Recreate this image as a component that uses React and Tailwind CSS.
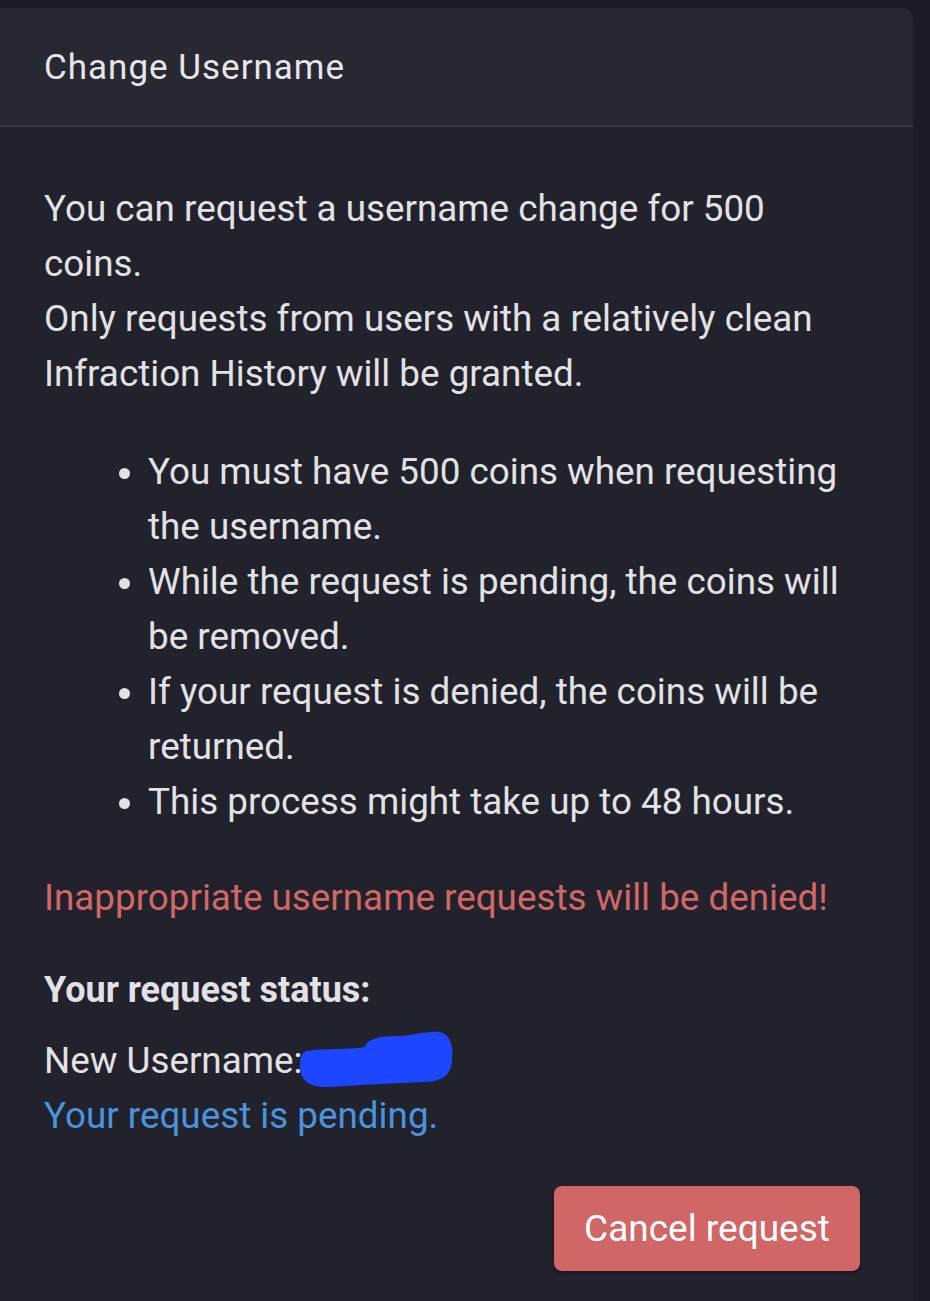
export default function App() {
  return (
    <div className="w-[930px] h-[1301px] bg-[#1b1b26] pt-[8px] overflow-hidden" style={{ fontFamily: "Roboto, 'Noto Sans', sans-serif" }}>
      <div className="w-[913px] h-[1320px] bg-[#22222c] rounded-tr-[10px] flex flex-col">
        <div className="h-[119px] bg-[#282833] rounded-tr-[10px] border-b-2 border-[#393945] flex items-center pl-[44px] pt-[4px]">
          <h1 className="text-[35px] text-[#e6e6ea] tracking-[1px]">Change Username</h1>
        </div>
        <div className="pl-[44px] pr-[52px] pt-[54px] text-[36.8px] leading-[55px] text-[#e2e2e6]">
          <p>You can request a username change for 500 coins.<br />Only requests from users with a relatively clean Infraction History will be granted.</p>
          <ul className="list-disc pl-[104px] mt-[43px] marker:text-[#e2e2e6]">
            <li>You must have 500 coins when requesting the username.</li>
            <li>While the request is pending, the coins will be removed.</li>
            <li>If your request is denied, the coins will be returned.</li>
            <li>This process might take up to 48 hours.</li>
          </ul>
          <p className="text-[#d26766] mt-[41px]">Inappropriate username requests will be denied!</p>
          <p className="font-bold mt-[38px] text-[36px]">Your request status:</p>
          <div className="mt-[15px] flex items-center h-[55px]">
            <span>New Username:</span>
            <svg width="155" height="58" viewBox="0 0 155 58" className="-ml-[3px] -mt-[4px]">
              <path d="M8 21 C 25 18, 50 20, 66 17 C 68 9, 80 6, 100 6 C 115 6, 125 1, 140 2 C 150 3, 155 15, 153 30 C 152 45, 145 51, 125 52 C 95 53, 60 55, 30 57 C 10 58, 2 50, 1 38 C 0 28, 3 22, 8 21 Z" fill="#1c46ff" />
            </svg>
          </div>
          <p className="text-[#4a93de]">Your request is pending.</p>
          <div className="flex justify-end pr-[1px] mt-[43px]">
            <button className="bg-[#d06666] text-white text-[37px] rounded-[8px] w-[306px] h-[85px] shadow-[0_2px_3px_rgba(0,0,0,0.4)]">Cancel request</button>
          </div>
        </div>
      </div>
    </div>
  );
}
